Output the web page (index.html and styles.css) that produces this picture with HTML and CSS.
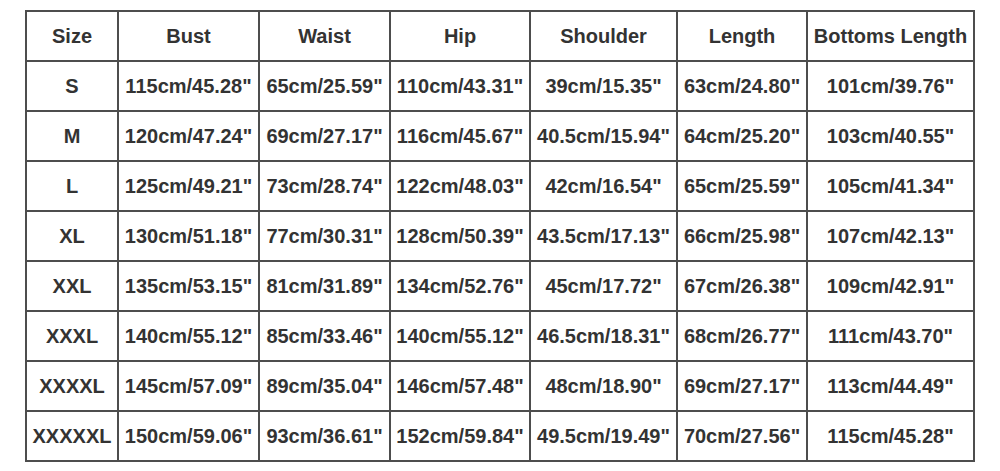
FILE: index.html
```html
<!DOCTYPE html>
<html>
<head>
<meta charset="utf-8">
<link rel="stylesheet" href="styles.css">
</head>
<body>
<table class="size-table">
  <colgroup>
    <col class="c1"><col class="c2"><col class="c3"><col class="c4"><col class="c5"><col class="c6"><col class="c7">
  </colgroup>
  <thead>
    <tr><th>Size</th><th>Bust</th><th>Waist</th><th>Hip</th><th>Shoulder</th><th>Length</th><th>Bottoms Length</th></tr>
  </thead>
  <tbody>
    <tr><td>S</td><td>115cm/45.28"</td><td>65cm/25.59"</td><td>110cm/43.31"</td><td>39cm/15.35"</td><td>63cm/24.80"</td><td>101cm/39.76"</td></tr>
    <tr><td>M</td><td>120cm/47.24"</td><td>69cm/27.17"</td><td>116cm/45.67"</td><td>40.5cm/15.94"</td><td>64cm/25.20"</td><td>103cm/40.55"</td></tr>
    <tr><td>L</td><td>125cm/49.21"</td><td>73cm/28.74"</td><td>122cm/48.03"</td><td>42cm/16.54"</td><td>65cm/25.59"</td><td>105cm/41.34"</td></tr>
    <tr><td>XL</td><td>130cm/51.18"</td><td>77cm/30.31"</td><td>128cm/50.39"</td><td>43.5cm/17.13"</td><td>66cm/25.98"</td><td>107cm/42.13"</td></tr>
    <tr><td>XXL</td><td>135cm/53.15"</td><td>81cm/31.89"</td><td>134cm/52.76"</td><td>45cm/17.72"</td><td>67cm/26.38"</td><td>109cm/42.91"</td></tr>
    <tr><td>XXXL</td><td>140cm/55.12"</td><td>85cm/33.46"</td><td>140cm/55.12"</td><td>46.5cm/18.31"</td><td>68cm/26.77"</td><td>111cm/43.70"</td></tr>
    <tr><td>XXXXL</td><td>145cm/57.09"</td><td>89cm/35.04"</td><td>146cm/57.48"</td><td>48cm/18.90"</td><td>69cm/27.17"</td><td>113cm/44.49"</td></tr>
    <tr><td>XXXXXL</td><td>150cm/59.06"</td><td>93cm/36.61"</td><td>152cm/59.84"</td><td>49.5cm/19.49"</td><td>70cm/27.56"</td><td>115cm/45.28"</td></tr>
  </tbody>
</table>
</body>
</html>
```
FILE: styles.css
```css
html, body {
  margin: 0;
  padding: 0;
  background: #ffffff;
}
.size-table {
  margin: 10px 0 0 25px;
  border-collapse: separate;
  border-spacing: 0;
  table-layout: fixed;
  width: 950px;
  border-left: 2px solid #4d4d4d;
  border-top: 2px solid #4d4d4d;
  font-family: "Liberation Sans", Arial, sans-serif;
  font-size: 20px;
  font-weight: bold;
  color: #333333;
}
.c1 { width: 92px; }
.c2 { width: 141px; }
.c3 { width: 131px; }
.c4 { width: 140px; }
.c5 { width: 147px; }
.c6 { width: 130px; }
.c7 { width: 167px; }
.size-table th,
.size-table td {
  box-sizing: border-box;
  height: 50px;
  padding: 0;
  text-align: center;
  vertical-align: middle;
  white-space: nowrap;
  border-right: 2px solid #4d4d4d;
  border-bottom: 2px solid #4d4d4d;
  font-weight: bold;
  line-height: 22px;
}
```
